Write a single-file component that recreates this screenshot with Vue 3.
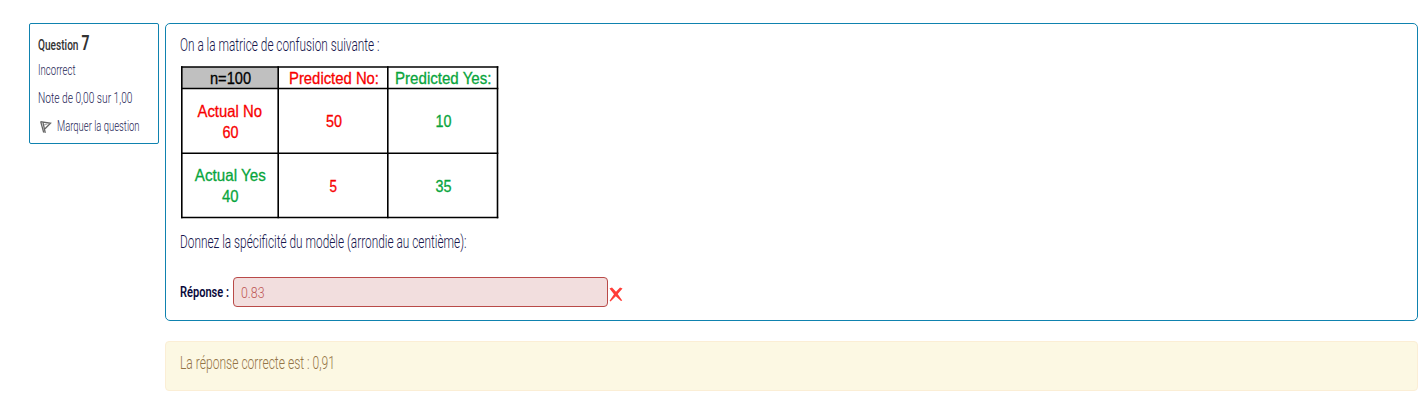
<script setup>
const rules = {
  vertical: [1.8, 98.2, 207.8, 317.5],
  horizontal: [2, 23.5, 88.3, 152.5],
}
const cells = [
  { t: 'n=100', x: 30, y: 19, w: 41, c: 'ink' },
  { t: 'Predicted No:', x: 109, y: 19, w: 90, c: 'red' },
  { t: 'Predicted Yes:', x: 215, y: 19, w: 96.5, c: 'green' },
  { t: 'Actual No', x: 17.5, y: 52, w: 64.5, c: 'red' },
  { t: '60', x: 42.5, y: 73, w: 16, c: 'red' },
  { t: '50', x: 146, y: 62, w: 16, c: 'red' },
  { t: '10', x: 255.5, y: 62, w: 16, c: 'green' },
  { t: 'Actual Yes', x: 14.8, y: 116, w: 71, c: 'green' },
  { t: '40', x: 42, y: 137, w: 16.5, c: 'green' },
  { t: '5', x: 149.5, y: 126.5, w: 7.5, c: 'red' },
  { t: '35', x: 255.5, y: 126.5, w: 16, c: 'green' },
]
</script>

<template>
  <main class="question">
    <aside class="info">
      <div class="heading">
        <svg width="43" height="28">
          <text class="label" x="0" y="17.7" textLength="40.5" lengthAdjust="spacingAndGlyphs">Question</text>
        </svg>
        <svg width="12" height="28">
          <text class="number" x="0.5" y="17.7" textLength="8" lengthAdjust="spacingAndGlyphs">7</text>
        </svg>
      </div>
      <svg class="line" width="112" height="28">
        <text class="small" x="0" y="14.7" textLength="37.5" lengthAdjust="spacingAndGlyphs">Incorrect</text>
      </svg>
      <svg class="line" width="112" height="28">
        <text class="small" x="0" y="14.7" textLength="94.5" lengthAdjust="spacingAndGlyphs">Note de 0,00 sur 1,00</text>
      </svg>
      <div class="heading">
        <svg width="19" height="24" fill="none" stroke="#666" stroke-width="1.3">
          <path d="M2.5 5.7 L12.5 7.3 L7 12.7 M2.7 5.7 L5.7 16.5 M5 6.7 L7.3 16.8" />
          <path d="M6 9 L9.5 7.9" stroke="#aaa" />
        </svg>
        <svg width="90" height="24">
          <text class="small" x="0" y="14.7" textLength="82.5" lengthAdjust="spacingAndGlyphs">Marquer la question</text>
        </svg>
      </div>
    </aside>

    <div class="content">
      <section class="formulation">
        <svg class="line" width="300" height="41">
          <text class="body" x="0" y="26.7" textLength="199.5" lengthAdjust="spacingAndGlyphs">On a la matrice de confusion suivante :</text>
        </svg>
        <svg class="line matrix" width="320" height="155">
          <rect x="2" y="2" width="96" height="21" fill="#c0c0c0" />
          <path v-for="x in rules.vertical" :key="'v' + x" :d="`M${x} 1.2V153.3`" class="rule" />
          <path v-for="y in rules.horizontal" :key="'h' + y" :d="`M1 ${y}H318.3`" class="rule" />
          <text
            v-for="cell in cells"
            :key="cell.t"
            :class="cell.c"
            :x="cell.x"
            :y="cell.y"
            :textLength="cell.w"
            lengthAdjust="spacingAndGlyphs"
          >{{ cell.t }}</text>
        </svg>
        <svg class="line" width="320" height="57">
          <text class="body" x="0" y="27.7" textLength="286.5" lengthAdjust="spacingAndGlyphs">Donnez la spécificité du modèle (arrondie au centième):</text>
        </svg>
        <div class="answer">
          <svg width="53" height="30">
            <text class="prompt" x="0" y="20.3" textLength="49" lengthAdjust="spacingAndGlyphs">Réponse :</text>
          </svg>
          <div class="field">
            <svg width="60" height="28">
              <text class="value" x="0" y="20" textLength="23.5" lengthAdjust="spacingAndGlyphs">0.83</text>
            </svg>
          </div>
          <svg class="cross" width="16" height="30" fill="#ff3d38">
            <path d="M1.5 11.5 L4 10.5 L8 14.8 L12 10.5 L14.5 11.5 L9.7 17 L14.2 23.5 L13 24 L7.8 19.2 L2.5 24.5 L1.6 23.8 L6 17.2 Z" />
          </svg>
        </div>
      </section>

      <section class="feedback">
        <svg class="line" width="220" height="46">
          <text class="result" x="0" y="27" textLength="155" lengthAdjust="spacingAndGlyphs">La réponse correcte est : 0,91</text>
        </svg>
      </section>
    </div>
  </main>
</template>

<style scoped>
.question {
  box-sizing: border-box;
  width: 1428px;
  height: 413px;
  padding: 23px 10px 0 29px;
  display: flex;
  align-items: flex-start;
  gap: 6px;
  background: #fff;
  font-family: Roboto, "Liberation Sans", sans-serif;
}
svg { flex: none; overflow: visible; }
.line { display: block; }
.info {
  box-sizing: border-box;
  width: 130px;
  height: 121px;
  padding: 8px 8px 0;
  border: 1px solid #0f82af;
  border-radius: 2px;
}
.heading { display: flex; }
.content { flex: 1; }
.formulation {
  box-sizing: border-box;
  height: 298px;
  padding: 0 14px;
  border: 1px solid #0f82af;
  border-radius: 5px;
}
.answer { display: flex; }
.field {
  box-sizing: border-box;
  width: 375px;
  height: 30px;
  padding-left: 6.5px;
  border: 1px solid #b94a48;
  border-radius: 4px;
  background: #f2dede;
}
.feedback {
  box-sizing: border-box;
  height: 50px;
  margin-top: 20px;
  padding: 0 14px;
  border: 1px solid #fbeed5;
  border-radius: 4px;
  background: #fcf8e3;
}
.label { font-size: 14.5px; font-weight: 500; fill: #333; }
.number { font-size: 20px; font-weight: 700; fill: #333; }
.small { font-size: 15px; font-weight: 300; fill: #1f1f57; }
.body { font-size: 19px; font-weight: 300; fill: #16164c; }
.prompt { font-size: 15px; font-weight: 600; fill: #0a0a3c; }
.value { font-size: 15.5px; font-weight: 300; fill: #bd5553; }
.result { font-size: 19px; font-weight: 300; fill: #947446; }
.matrix { font-family: "Liberation Sans", Arial, sans-serif; font-size: 16.5px; }
.matrix text { stroke-width: 0.3px; }
.rule { stroke: #000; stroke-width: 1.6; fill: none; }
.ink { fill: #000; stroke: #000; }
.red { fill: #f80000; stroke: #f80000; }
.green { fill: #08a53c; stroke: #08a53c; }
</style>

<style>
body { background: #fff; overflow: hidden; }
</style>
